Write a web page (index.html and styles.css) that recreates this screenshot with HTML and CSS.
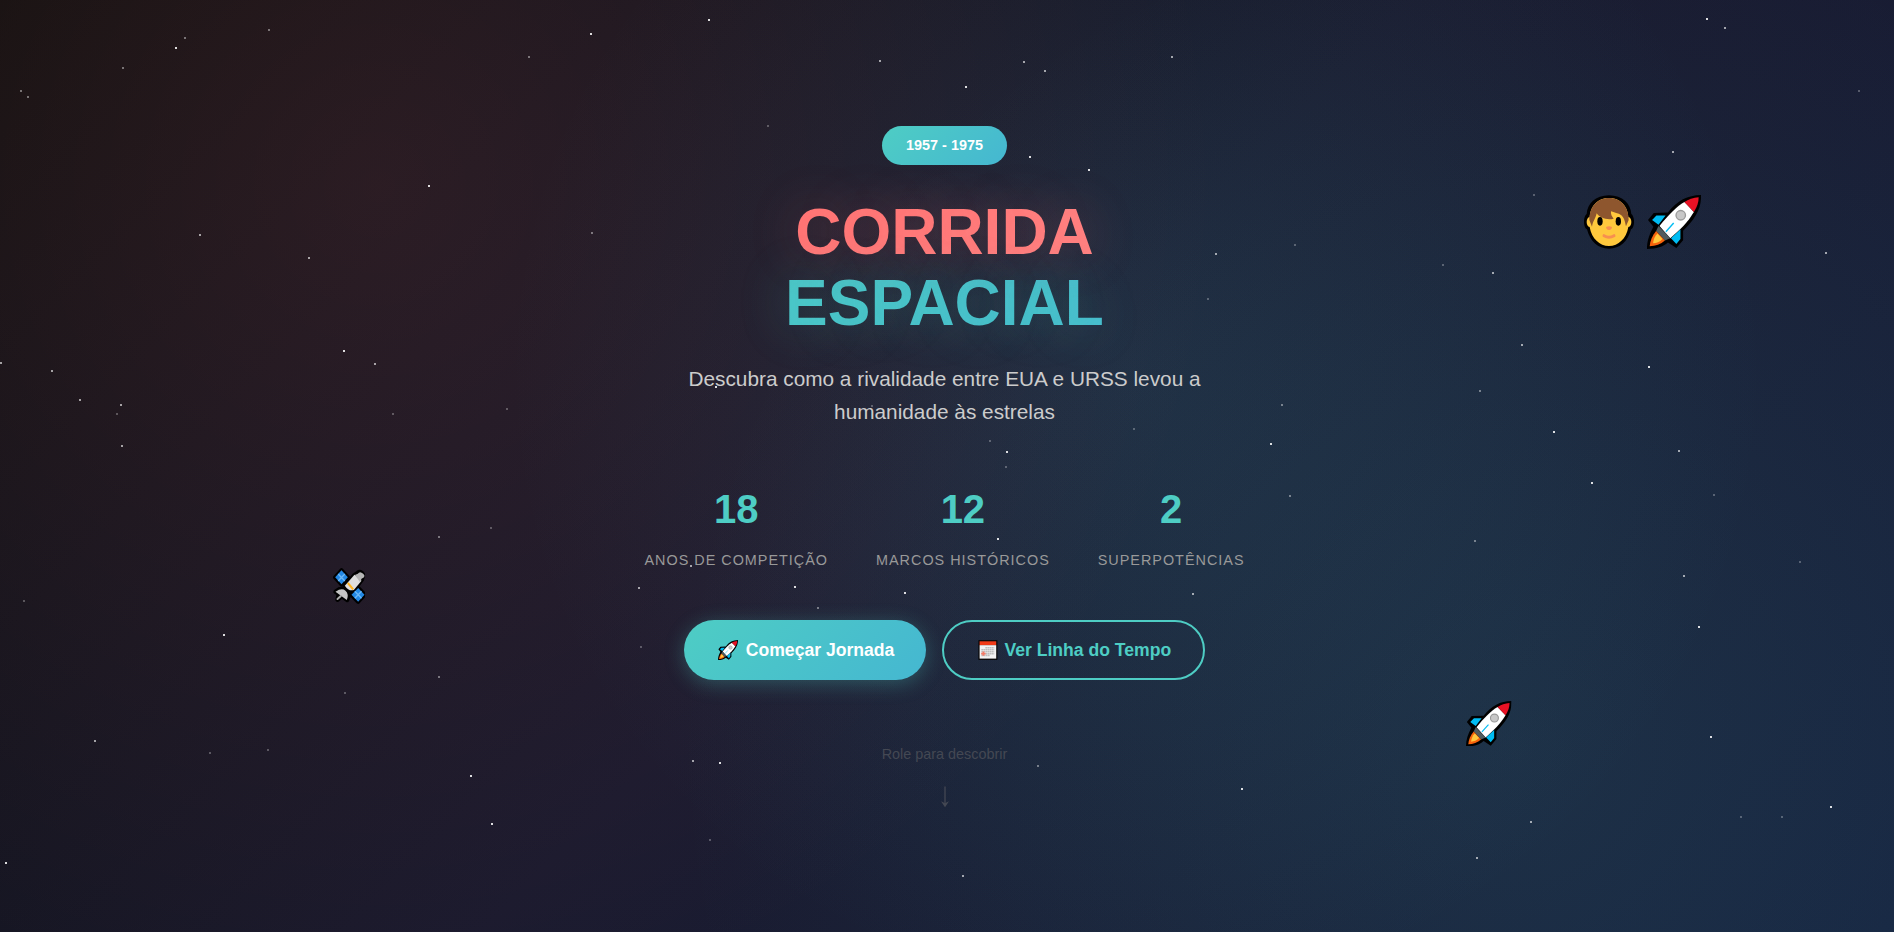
FILE: index.html
```html
<!DOCTYPE html>
<html lang="pt-BR">
<head>
<meta charset="utf-8">
<title>Corrida Espacial</title>
<link rel="stylesheet" href="styles.css">
</head>
<body>
<svg class="defs" aria-hidden="true">
  <symbol id="rocket" viewBox="230 44 160 160">
    <path fill="#000" d="M390 44C350 45 320 60 292 96L250 97 233 118 249 138C236 162 230 182 230 204 258 204 278 198 292 185L317 201 337 178 337 150C370 118 392 86 390 44Z"/>
    <path fill="#00bcf2" d="M258 105H285L264 132 245 118ZM329 146V174L317 189 301 172Z"/>
    <path fill="#fff" d="M341 65C318 78 292 105 267 136L299 172C328 146 350 126 369 94Z"/>
    <path fill="#e81224" d="M383 51C368 52 352 57 341 65L369 94C379 79 383 66 383 51Z"/>
    <path fill="#515c5e" d="M264 136L257 151 283 179 299 172Z"/>
    <path fill="#f7630c" d="M257 151C246 164 239 180 238 196 255 195 271 190 283 179Z"/>
    <path fill="#ffc83d" d="M261 158C252 166 249 177 248 187 258 186 268 183 276 174Z"/>
    <circle cx="330" cy="104" r="14" fill="#c8c8c8" stroke="#9b9b9b" stroke-width="4"/>
    <path d="M286 153L309 127" stroke="#00bcf2" stroke-width="4"/>
  </symbol>
</svg>
<section class="hero">
  <svg class="stars" id="stars" aria-hidden="true"></svg>

  <svg class="floating face" viewBox="42 44 150 160" aria-hidden="true">
    <path fill="#000" d="M117 44C158 44 182 70 184 100 195 108 195 140 183 146 174 182 150 204 117 204S60 182 51 146C39 140 39 108 50 100 52 70 76 44 117 44Z"/>
    <path fill="#ffc83d" d="M117 52C150 52 173 75 175 109 187 111 187 137 175 139 169 174 145 196 117 196S65 174 59 139C47 137 47 111 59 109 61 75 84 52 117 52Z"/>
    <path fill="#8e562e" d="M117 52C82 52 58 78 58 118L66 138C69 120 76 116 80 98 89 112 112 119 131 114 126 108 122 102 123 92 132 96 145 97 154 104 164 113 165 125 168 137L176 118C176 77 151 52 117 52Z"/>
    <ellipse cx="90" cy="122" rx="8" ry="13"/><ellipse cx="145" cy="122" rx="8" ry="13"/>
    <path fill="#f78f50" d="M108 139Q117 134 126 139 125 148 117 148T108 139Z"/>
    <path fill="none" stroke="#f78f50" stroke-width="9" stroke-linecap="round" d="M102 165Q117 174 132 165"/>
  </svg>
  <svg class="floating rocket-large" aria-hidden="true"><use href="#rocket"/></svg>
  <svg class="floating rocket-small" aria-hidden="true"><use href="#rocket"/></svg>
  <svg class="floating satellite" viewBox="36 37 98 108" aria-hidden="true">
    <g stroke="#000" stroke-width="13" stroke-linejoin="round">
      <path d="M64 44L83 65 64 86 45 65ZM114 97L133 117 114 138 94 117Z"/>
      <path d="M103 58L112 52Q122 44 129 57L125 72 102 102 88 106 74 92Z"/>
      <path d="M46 108Q64 94 78 103T81 133L65 122 52 132 56 115Z"/>
    </g>
    <path fill="#2388e4" d="M64 44L83 65 64 86 45 65ZM114 97L133 117 114 138 94 117Z"/>
    <path d="M54 55L74 76M74 55L54 76M104 107L124 128M124 107L104 128" stroke="#6bb8f7" stroke-width="4"/>
    <path fill="#dedede" d="M103 57L124 75 101 103Q86 108 74 90Z"/>
    <path fill="#b5b5b5" d="M104 58L113 54Q119 45 129 54T124 69L120 80Z"/>
    <path d="M83 82L99 101" stroke="#ffb41e" stroke-width="6"/>
    <path fill="#c4c4c4" d="M46 108Q65 95 76 105T80 133Z"/>
    <path d="M62 121L52 130" stroke="#aaa" stroke-width="6" stroke-linecap="round"/>
  </svg>

  <div class="hero-content">
    <div class="badge">1957 - 1975</div>
    <h1 class="title">
      <span class="line line-red">CORRIDA</span>
      <span class="line line-teal">ESPACIAL</span>
    </h1>
    <p class="subtitle">Descubra como a rivalidade entre EUA e URSS levou a humanidade às estrelas</p>
    <div class="stats">
      <div class="stat"><span class="number">18</span><span class="label">Anos de Competição</span></div>
      <div class="stat"><span class="number">12</span><span class="label">Marcos Históricos</span></div>
      <div class="stat"><span class="number">2</span><span class="label">Superpotências</span></div>
    </div>
    <div class="buttons">
      <a class="btn btn-primary"><svg class="btn-icon" aria-hidden="true"><use href="#rocket"/></svg>Começar Jornada</a>
      <a class="btn btn-secondary"><svg class="btn-icon" viewBox="0 0 20 20" aria-hidden="true">
        <rect x=".3" y="0" width="19.2" height="20" rx=".8" fill="#0b0b0d"/>
        <rect x="1.6" y="1.3" width="16.6" height="4" fill="#f03a17"/>
        <rect x="1.6" y="5.2" width="16.6" height="13.4" fill="#f3f3f3"/>
        <path stroke="#b8b8b8" stroke-width="1.5" stroke-dasharray="1.5 .5" d="M7.4 7.8H16.2M3.4 9.8H16.2M3.4 11.8H16.2M3.4 13.8H16.2M3.4 15.6H12"/>
        <path stroke="#f47a66" stroke-width="1.7" d="M5.4 11.4V15.8M3.2 13.6H7.6"/>
      </svg>Ver Linha do Tempo</a>
    </div>
    <div class="scroll-hint">
      <span>Role para descobrir</span>
      <svg class="arrow" viewBox="0 0 10 22" aria-hidden="true"><path d="M5 .5V20" stroke="currentColor" stroke-width="1.3"/><path d="M1 15.2L5 17.2 9 15.2 5 21.3Z" fill="currentColor"/></svg>
    </div>
  </div>
</section>
<script src="stars.js"></script>
</body>
</html>
```
FILE: styles.css
```css
* { box-sizing: border-box; margin: 0; padding: 0; }
body {
  font-family: "Liberation Sans", Arial, sans-serif;
  line-height: 1.6;
  color: #fff;
  background: #0f0f0f;
  overflow: hidden;
}
.defs { position: absolute; width: 0; height: 0; }
.hero {
  position: relative;
  height: 100vh;
  min-height: 932px;
  padding: 126.4px 5px 0 0;
  display: flex;
  justify-content: center;
  align-items: flex-start;
  overflow: hidden;
  background:
    radial-gradient(circle at 20% 20%, rgba(255, 107, 107, .1) 0%, transparent 50%),
    radial-gradient(circle at 80% 80%, rgba(78, 205, 196, .1) 0%, transparent 50%),
    radial-gradient(circle at 60% 40%, rgba(69, 183, 209, .1) 0%, transparent 50%),
    linear-gradient(135deg, #0f0f0f 0%, #1a1a2e 50%, #16213e 100%);
}
.stars { position: absolute; inset: 0; width: 100%; height: 100%; fill: #fff; pointer-events: none; }
.floating { position: absolute; }
.face { left: 1584px; top: 194.5px; width: 50px; height: 54px; }
.rocket-large { left: 1646.5px; top: 194.5px; width: 54px; height: 54px; }
.rocket-small { left: 1466px; top: 700.5px; width: 45.5px; height: 45.5px; }
.satellite { left: 332px; top: 567.5px; width: 33px; height: 36px; }

.hero-content {
  position: relative;
  width: 800px;
  display: flex;
  flex-direction: column;
  align-items: center;
  text-align: center;
}
.badge {
  padding: 8px 24px;
  margin-bottom: 32px;
  border-radius: 25px;
  font-size: 14.4px;
  font-weight: 700;
  background: linear-gradient(135deg, #4ecdc4, #45b7d1);
}
.title { width: 100%; margin-bottom: 24px; font-size: 64px; font-weight: 700; line-height: 1.1; }
.line { display: block; background-clip: text; -webkit-background-clip: text; -webkit-text-fill-color: transparent; }
.line-red {
  background-image: linear-gradient(135deg, #ff6b6b, #ff8e8e);
  text-shadow: 0 0 50px rgba(255, 107, 107, .3);
}
.line-teal {
  background-image: linear-gradient(135deg, #4ecdc4, #45b7d1);
  text-shadow: 0 0 50px rgba(78, 205, 196, .3);
}
.subtitle { max-width: 600px; margin-bottom: 48px; font-size: 20.8px; color: #ccc; }
.stats { display: flex; gap: 48px; margin-bottom: 48px; }
.stat { display: flex; flex-direction: column; gap: 8px; }
.number { font-size: 40px; font-weight: 700; color: #4ecdc4; }
.label { font-size: 14.4px; letter-spacing: 1px; text-transform: uppercase; color: #999; }
.buttons { display: flex; gap: 16px; margin-bottom: 63px; }
.btn {
  display: flex;
  align-items: center;
  padding: 16px 32px;
  border-radius: 30px;
  font-size: 17.6px;
  font-weight: 700;
  white-space: nowrap;
}
.btn-icon { width: 20px; height: 20px; margin: 0 7px 0 2px; }
.btn-primary {
  background: linear-gradient(135deg, #4ecdc4, #45b7d1);
  box-shadow: 0 4px 20px rgba(78, 205, 196, .3);
}
.btn-primary .btn-icon { margin-right: 8px; }
.btn-secondary { padding: 14px 32px; border: 2px solid #4ecdc4; color: #4ecdc4; }
.btn-secondary .btn-icon { margin-right: 6px; }
.scroll-hint {
  display: flex;
  flex-direction: column;
  align-items: center;
  gap: 20px;
  font-size: 14.4px;
  color: #444853;
}
.arrow { width: 10px; height: 22px; }
```
FILE: stars.js
```js
// [x, y] positions of the 2px stars, grouped by opacity
const groups = {
  0.85: [[176,48],[591,34],[429,186],[344,351],[1707,19],[1649,367],[1554,432],[1271,444],[224,635],[471,776],[492,824],[6,863],[1592,483],[1699,627],[1711,737],[1831,807],[709,20],[966,87],[1030,157],[1089,170],[716,387],[1007,452],[998,539],[795,587],[905,593],[720,763],[1242,789]],
  0.6: [[309,258],[375,364],[1,363],[122,446],[121,405],[80,400],[1725,28],[1673,152],[1493,273],[1826,253],[1522,345],[1679,451],[639,588],[95,741],[1684,576],[1531,822],[1477,858],[880,61],[1024,62],[1045,71],[1172,57],[1216,254],[691,566],[693,761],[963,876],[52,371],[200,235],[1193,594]],
  0.4: [[21,91],[28,97],[123,68],[185,38],[269,30],[529,57],[592,233],[1282,405],[439,537],[439,677],[1475,541],[1480,391],[1290,496],[1038,766],[818,608]],
  0.27: [[117,414],[393,414],[507,409],[1859,91],[1534,195],[1295,245],[1443,265],[491,528],[24,601],[345,693],[210,753],[268,750],[1714,495],[1800,562],[1741,817],[1782,817],[768,126],[1208,299],[872,406],[1134,429],[990,441],[1006,467],[641,647],[710,840]]
};
document.getElementById("stars").innerHTML = Object.entries(groups).map(([opacity, stars]) =>
  `<g opacity="${opacity}">` + stars.map(([x, y]) => `<rect x="${x - 1}" y="${y - 1}" width="2" height="2"/>`).join("") + "</g>"
).join("");
```
